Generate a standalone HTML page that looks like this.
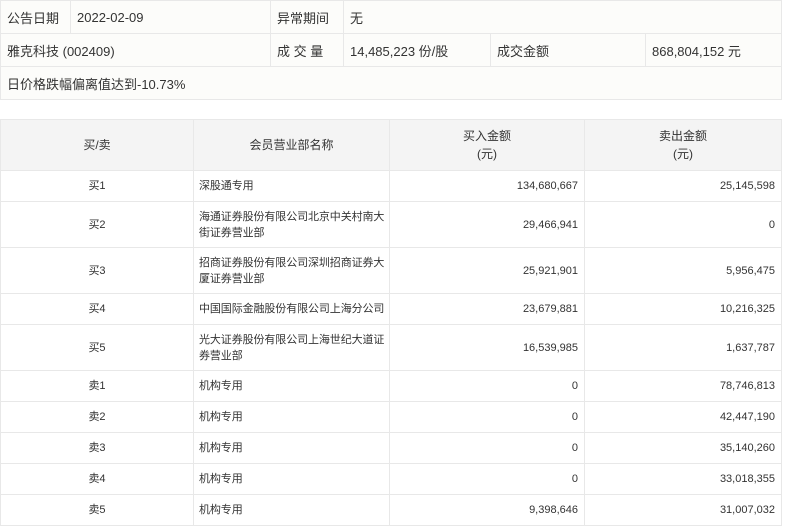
<!DOCTYPE html>
<html><head><meta charset="utf-8"><style>
*{margin:0;padding:0;box-sizing:border-box}
body{width:794px;height:523px;overflow:hidden;background:#fff;font-family:"Liberation Sans","Noto Sans CJK SC",sans-serif;color:#333}
table{border-collapse:collapse;table-layout:fixed;position:absolute;left:0;width:781px}
td,th{border:1px solid #e8e8e8;font-weight:normal}
#t1{top:0;background:#fcfcfa;font-size:13px}
#t1 td{height:33px;padding:0 6px}
#t2{top:119px;font-size:11px}
#t2 th{background:#f4f4f4;height:51px;font-size:12px;line-height:18px}
#t2 td{padding:0 6px;line-height:16px}
#t2 td.n{padding:0 1px 0 5px;letter-spacing:-0.1px}
.c{text-align:center}.r{text-align:right}
</style></head><body>
<table id="t1">
<colgroup><col width="70"><col width="200"><col width="73"><col width="147"><col width="155"><col width="136"></colgroup>
<tr><td>公告日期</td><td>2022-02-09</td><td>异常期间</td><td colspan="3">无</td></tr>
<tr><td colspan="2" style="padding-left:6px">雅克科技 (002409)</td><td>成 交 量</td><td>14,485,223 份/股</td><td>成交金额</td><td>868,804,152 元</td></tr>
<tr><td colspan="6">日价格跌幅偏离值达到-10.73%</td></tr>
</table>
<table id="t2">
<colgroup><col width="193"><col width="196"><col width="195"><col width="197"></colgroup>
<tr><th>买/卖</th><th>会员营业部名称</th><th>买入金额<br>(元)</th><th>卖出金额<br>(元)</th></tr>
<tr style="height:31px"><td class="c">买1</td><td class="n">深股通专用</td><td class="r">134,680,667</td><td class="r">25,145,598</td></tr>
<tr style="height:46px"><td class="c">买2</td><td class="n">海通证券股份有限公司北京中关村南大街证券营业部</td><td class="r">29,466,941</td><td class="r">0</td></tr>
<tr style="height:46px"><td class="c">买3</td><td class="n">招商证券股份有限公司深圳招商证券大厦证券营业部</td><td class="r">25,921,901</td><td class="r">5,956,475</td></tr>
<tr style="height:31px"><td class="c">买4</td><td class="n" style="white-space:nowrap">中国国际金融股份有限公司上海分公司</td><td class="r">23,679,881</td><td class="r">10,216,325</td></tr>
<tr style="height:46px"><td class="c">买5</td><td class="n">光大证券股份有限公司上海世纪大道证券营业部</td><td class="r">16,539,985</td><td class="r">1,637,787</td></tr>
<tr style="height:31px"><td class="c">卖1</td><td class="n">机构专用</td><td class="r">0</td><td class="r">78,746,813</td></tr>
<tr style="height:31px"><td class="c">卖2</td><td class="n">机构专用</td><td class="r">0</td><td class="r">42,447,190</td></tr>
<tr style="height:31px"><td class="c">卖3</td><td class="n">机构专用</td><td class="r">0</td><td class="r">35,140,260</td></tr>
<tr style="height:31px"><td class="c">卖4</td><td class="n">机构专用</td><td class="r">0</td><td class="r">33,018,355</td></tr>
<tr style="height:31px"><td class="c">卖5</td><td class="n">机构专用</td><td class="r">9,398,646</td><td class="r">31,007,032</td></tr>
</table>
</body></html>
